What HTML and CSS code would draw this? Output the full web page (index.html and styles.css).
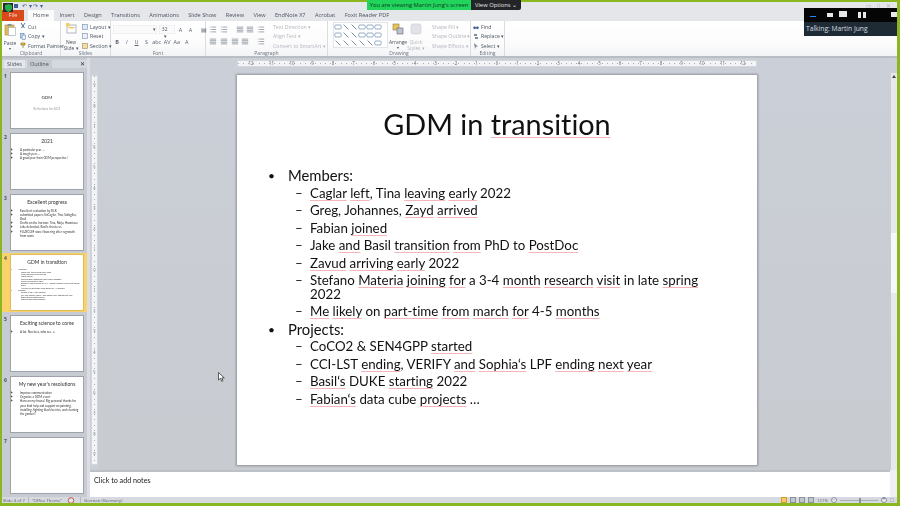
FILE: index.html
```html
<!DOCTYPE html>
<html lang="en">
<head>
<meta charset="utf-8">
<title>GDM in transition</title>
<link rel="stylesheet" href="styles.css">
</head>
<body>
<svg class="defs" width="0" height="0">
  <symbol id="lines" viewBox="0 0 10 8"><path d="M1 1h1M3 1h6M1 4h1M3 4h6M1 7h1M3 7h6" stroke="#8a919c" fill="none"/></symbol>
  <symbol id="align" viewBox="0 0 10 8"><path d="M1 1h8M1 3h8M1 5h8M1 7h8" stroke="#8a919c" fill="none"/></symbol>
  <symbol id="shape" viewBox="0 0 10 8"><rect x="1" y="1.5" width="8" height="5" rx="1.5" fill="#fff" stroke="#5b7fa8" stroke-width=".8"/></symbol>
  <symbol id="line" viewBox="0 0 10 8"><path d="M2 1l6 6" stroke="#5f6c7c" fill="none"/></symbol>
</svg>
<div class="app">
  <div class="titlebar"><span class="qat"><i class="save"></i>↶ ▾ ↷ ▾</span><span class="winctl">▭ ▯ ✕</span></div>
  <nav class="tabs">
    <span class="file">File</span>
    <span class="tab active">Home</span><span class="tab">Insert</span><span class="tab">Design</span><span class="tab">Transitions</span><span class="tab">Animations</span><span class="tab">Slide Show</span><span class="tab">Review</span><span class="tab">View</span><span class="tab">EndNote X7</span><span class="tab">Acrobat</span><span class="tab">Foxit Reader PDF</span>
  </nav>
  <div class="ribbon">
    <section class="group g-clip">
      <div class="gbody">
        <div class="bigbtn">
          <svg width="12" height="13" viewBox="0 0 12 13"><rect x="1" y="2" width="9" height="10" fill="#e0b860" stroke="#a98a45" stroke-width=".6"/><rect x="4.5" y="4.5" width="7" height="8" fill="#fff" stroke="#9aa" stroke-width=".6"/><rect x="3.5" y="1" width="4" height="2" fill="#8a8f96"/></svg>
          <span class="bl">Paste</span><span class="caret">▾</span>
        </div>
        <div class="col">
          <span class="item"><svg width="6" height="7" viewBox="0 0 6 7"><path d="M1 0l3.5 5M5 0L1.5 5" stroke="#4a6fa5" fill="none"/></svg>Cut</span>
          <span class="item"><svg width="6" height="7" viewBox="0 0 6 7"><rect x=".5" y=".5" width="3.5" height="4.5" fill="#cfe0f2" stroke="#4a6fa5" stroke-width=".5"/><rect x="2" y="2" width="3.5" height="4.5" fill="#e8f0fa" stroke="#4a6fa5" stroke-width=".5"/></svg>Copy ▾</span>
          <span class="item"><svg width="6" height="7" viewBox="0 0 6 7"><path d="M1 1h4v2H1zM3 3v3" stroke="#8a6d20" fill="#f0c840" stroke-width=".7"/></svg>Format Painter</span>
        </div>
      </div>
      <div class="glabel">Clipboard</div>
    </section>
    <section class="group g-slides">
      <div class="gbody">
        <div class="bigbtn newslide">
          <svg width="11" height="12" viewBox="0 0 11 12"><rect x="1" y="2" width="9" height="8" fill="#fff" stroke="#8f98a6" stroke-width=".7"/><rect x="2.5" y="4" width="6" height="1.4" fill="#e9c86a"/><rect x="0" y="0" width="3.5" height="3.5" fill="#f4cf5f"/></svg>
          <span class="bl">New</span><span class="bl">Slide ▾</span>
        </div>
        <div class="col">
          <span class="item"><svg width="6" height="6" viewBox="0 0 6 6"><rect x=".5" y=".5" width="5" height="5" fill="#dfe8f3" stroke="#6f8db0" stroke-width=".6"/></svg>Layout ▾</span>
          <span class="item"><svg width="6" height="6" viewBox="0 0 6 6"><rect x=".5" y=".5" width="5" height="5" fill="#eef2f7" stroke="#6f8db0" stroke-width=".6"/></svg>Reset</span>
          <span class="item"><svg width="6" height="6" viewBox="0 0 6 6"><rect x=".5" y=".5" width="5" height="5" fill="#f2dfa8" stroke="#9d8a52" stroke-width=".6"/></svg>Section ▾</span>
        </div>
      </div>
      <div class="glabel">Slides</div>
    </section>
    <section class="group g-font">
      <div class="gbody stack">
        <div class="rowi"><span class="fbox fname">▾</span><span class="fbox fsize">32 <i>▾</i></span><span class="g">A</span><span class="g">A</span><span class="g ml">▤</span></div>
        <div class="rowi"><b class="g">B</b><i class="g">I</i><u class="g">U</u><span class="g">S</span><span class="g">abc</span><span class="g">AV</span><span class="g">Aa</span><span class="g">A</span></div>
      </div>
      <div class="glabel">Font</div>
    </section>
    <section class="group g-para">
      <div class="gbody">
        <div class="stack parastack">
          <div class="rowi"><svg class="ic"><use href="#lines"/></svg><svg class="ic"><use href="#lines"/></svg><svg class="ic sp1"><use href="#align"/></svg><svg class="ic"><use href="#align"/></svg><svg class="ic"><use href="#lines"/></svg></div>
          <div class="rowi"><svg class="ic"><use href="#align"/></svg><svg class="ic"><use href="#align"/></svg><svg class="ic"><use href="#align"/></svg><svg class="ic"><use href="#align"/></svg><svg class="ic sp1"><use href="#lines"/></svg></div>
        </div>
        <div class="col faded">
          <span class="item">Text Direction ▾</span>
          <span class="item">Align Text ▾</span>
          <span class="item">Convert to SmartArt ▾</span>
        </div>
      </div>
      <div class="glabel">Paragraph</div>
    </section>
    <section class="group g-draw">
      <div class="gbody">
        <div class="gallery">
          <svg class="ics"><use href="#shape"/></svg><svg class="ics"><use href="#line"/></svg><svg class="ics"><use href="#line"/></svg><svg class="ics"><use href="#shape"/></svg><svg class="ics"><use href="#shape"/></svg><svg class="ics"><use href="#shape"/></svg>
          <svg class="ics"><use href="#shape"/></svg><svg class="ics"><use href="#line"/></svg><svg class="ics"><use href="#line"/></svg><svg class="ics"><use href="#shape"/></svg><svg class="ics"><use href="#shape"/></svg><svg class="ics"><use href="#shape"/></svg>
          <svg class="ics"><use href="#line"/></svg><svg class="ics"><use href="#line"/></svg><svg class="ics"><use href="#line"/></svg><svg class="ics"><use href="#line"/></svg><svg class="ics"><use href="#line"/></svg><svg class="ics"><use href="#shape"/></svg>
        </div>
        <div class="bigbtn arrange">
          <svg width="12" height="12" viewBox="0 0 12 12"><rect x="1" y="1" width="6" height="6" fill="#e8c455" stroke="#8a7a45" stroke-width=".6"/><rect x="5" y="5" width="6" height="6" fill="#b9c3cf" stroke="#667" stroke-width=".6"/></svg>
          <span class="bl">Arrange</span><span class="caret">▾</span>
        </div>
        <div class="bigbtn quick faded">
          <svg width="12" height="12" viewBox="0 0 12 12"><rect x="1" y="1" width="10" height="10" rx="2" fill="#e2e3e6" stroke="#c7c9cd" stroke-width=".6"/></svg>
          <span class="bl">Quick</span><span class="bl">Styles ▾</span>
        </div>
        <div class="col faded shapecol">
          <span class="item">Shape Fill ▾</span>
          <span class="item">Shape Outline ▾</span>
          <span class="item">Shape Effects ▾</span>
        </div>
      </div>
      <div class="glabel">Drawing</div>
    </section>
    <section class="group g-edit">
      <div class="gbody">
        <div class="col">
          <span class="item"><svg width="6" height="6" viewBox="0 0 6 6"><circle cx="1.6" cy="3.8" r="1.4" fill="#3d5f91"/><circle cx="4.4" cy="3.8" r="1.4" fill="#3d5f91"/></svg>Find</span>
          <span class="item"><svg width="6" height="6" viewBox="0 0 6 6"><path d="M1 1h3v2H1zM2 4h3v2H2z" fill="#7d8b9c"/></svg>Replace ▾</span>
          <span class="item"><svg width="6" height="6" viewBox="0 0 6 6"><path d="M1 0l4 3.500-2 .3L2 6z" fill="#7d8b9c"/></svg>Select ▾</span>
        </div>
      </div>
      <div class="glabel">Editing</div>
    </section>
  </div>
  <div class="workspace">
    <aside class="pane">
      <div class="panetabs"><span class="ptab on">Slides</span><span class="ptab">Outline</span><span class="pclose">✕</span></div>
      <ol class="thumbs">
        <li class="trow"><span class="tnum">1</span><div class="thumb tcenter"><p class="tt">GDM</p><p class="tsub">Reflections for 2021</p></div></li>
        <li class="trow"><span class="tnum">2</span><div class="thumb"><p class="tt">2021</p><ul class="tl"><li>A particular year …</li><li>A tough year …</li><li>A good year from GDM perspective!</li></ul></div></li>
        <li class="trow"><span class="tnum">3</span><div class="thumb"><p class="tt">Excellent progress</p><ul class="tl"><li>Excellent evaluation by DLR</li><li>submitted papers: SnCaglar, Tina, Sofoglhu, Basil</li><li>Drafts on the horizon: Tina, Ninja, Hoontaee</li><li>Jake defended, Basil's thesis res</li><li>FLUXCOM store flowering after regrowth from roots</li></ul></div></li>
        <li class="trow cur"><span class="tnum">4</span><div class="thumb"><p class="tt">GDM in transition</p><ul class="tl tiny"><li>Members:<ul><li>Caglar left, Tina leaving early 2022</li><li>Greg, Johannes, Zayd arrived</li><li>Fabian joined</li><li>Jake and Basil transition from PhD to PostDoc</li><li>Zavud arriving early 2022</li><li>Stefano Materia joining for a 3-4 month research visit in late spring 2022</li><li>Me likely on part-time from march for 4-5 months</li></ul></li><li>Projects:<ul><li>CoCO2 &amp; SEN4GPP started</li><li>CCI-LST ending, VERIFY and Sophia's LPF ending next year</li><li>Basil's DUKE starting 2022</li><li>Fabian's data cube projects …</li></ul></li></ul></div></li>
        <li class="trow"><span class="tnum">5</span><div class="thumb"><p class="tt">Exciting science to come</p><ul class="tl"><li>A lot. No clues, who see ☺</li></ul></div></li>
        <li class="trow"><span class="tnum">6</span><div class="thumb"><p class="tt">My new year's resolutions</p><ul class="tl"><li>Improve communication</li><li>Organize a GDM event</li><li>Hans on my house! Big personal thanks for your kind help and support on painting, installing, fighting black berries, and cleaning the garden!!</li></ul></div></li>
        <li class="trow"><span class="tnum">7</span><div class="thumb"></div></li>
      </ol>
    </aside>
    <main class="editor">
      <div class="canvas-row">
        <div class="vruler"><span>9</span><span>8</span><span>7</span><span>6</span><span>5</span><span>4</span><span>3</span><span>2</span><span>1</span><span>0</span><span>1</span><span>2</span><span>3</span><span>4</span><span>5</span><span>6</span><span>7</span><span>8</span><span>9</span></div>
        <div class="stage">
          <div class="hruler"><span>12</span><span>11</span><span>10</span><span>9</span><span>8</span><span>7</span><span>6</span><span>5</span><span>4</span><span>3</span><span>2</span><span>1</span><span>0</span><span>1</span><span>2</span><span>3</span><span>4</span><span>5</span><span>6</span><span>7</span><span>8</span><span>9</span><span>10</span><span>11</span><span>12</span></div>
          <article class="slide">
            <h1 class="stitle">GDM in <span class="sp">transition</span></h1>
            <ul class="l1">
              <li>Members:
                <ul class="l2">
                  <li><span class="sp">Caglar</span> <span class="sp">left</span>, Tina <span class="sp">leaving</span> <span class="sp">early</span> 2022</li>
                  <li>Greg, Johannes, <span class="sp">Zayd</span> <span class="sp">arrived</span></li>
                  <li>Fabian <span class="sp">joined</span></li>
                  <li>Jake <span class="sp">and</span> Basil <span class="sp">transition</span> <span class="sp">from</span> PhD to <span class="sp">PostDoc</span></li>
                  <li><span class="sp">Zavud</span> <span class="sp">arriving</span> <span class="sp">early</span> 2022</li>
                  <li>Stefano <span class="sp">Materia</span> <span class="sp">joining</span> <span class="sp">for</span> a 3-4 <span class="sp">month</span> <span class="sp">research</span> <span class="sp">visit</span> in late <span class="sp">spring</span><br>2022</li>
                  <li><span class="sp">Me</span> <span class="sp">likely</span> on <span class="sp">part-time</span> <span class="sp">from</span> <span class="sp">march</span> <span class="sp">for</span> 4-5 <span class="sp">months</span></li>
                </ul>
              </li>
              <li>Projects:
                <ul class="l2">
                  <li>CoCO2 &amp; SEN4GPP <span class="sp">started</span></li>
                  <li>CCI-LST <span class="sp">ending</span>, VERIFY <span class="sp">and</span> <span class="sp">Sophia‘s</span> LPF <span class="sp">ending</span> <span class="sp">next</span> <span class="sp">year</span></li>
                  <li><span class="sp">Basil‘s</span> DUKE <span class="sp">starting</span> 2022</li>
                  <li><span class="sp">Fabian‘s</span> data cube <span class="sp">projects</span> …</li>
                </ul>
              </li>
            </ul>
          </article>
        </div>
        <div class="vscroll"><i></i><b></b></div>
      </div>
      <div class="notes"><span>Click to add notes</span><div class="nscroll"></div></div>
    </main>
  </div>
  <footer class="status">
    <span>Slide 4 of 7</span><span class="sep">"Office Theme"</span>
    <svg class="sep-ic" width="8" height="7" viewBox="0 0 8 7"><circle cx="4" cy="3.500" r="2.800" fill="#dfe7f2" stroke="#c0392b" stroke-width=".8"/></svg>
    <span class="sep">German (Germany)</span>
    <span class="views"><i class="vb on"></i><i class="vb"></i><i class="vb"></i><i class="vb"></i></span>
    <span class="zoomv">121%</span>
    <span class="zbtn">−</span><span class="zslider"><i></i></span><span class="zbtn">+</span><span class="fit">⛶</span>
  </footer>
</div>
<div class="shield"><svg width="7" height="8" viewBox="0 0 7 8"><path d="M3.500 0L7 1.200V4c0 2-1.700 3.300-3.500 4C1.700 7.300 0 6 0 4V1.200z" fill="#26b04d"/></svg></div>
<div class="banner"><span class="bview">You are viewing Martin Jung's screen</span><span class="bopt">View Options ⌄</span></div>
<div class="zpanel">
  <div class="ztools"><i class="zt t1"></i><i class="zt t2"></i><i class="zt t3"></i><i class="zt t4"></i><i class="zt t5"></i></div>
  <div class="ztalk">Talking: Martin Jung</div>
</div>
<svg class="cursor" width="7" height="10" viewBox="0 0 7 10"><path d="M.5.500v7.500l2-1.700 1.200 3 1.300-.5-1.200-2.900H6.300z" fill="#fff" stroke="#222" stroke-width=".7"/></svg>
</body>
</html>
```

FILE: styles.css
```css
* { box-sizing: border-box; }
html, body { margin: 0; padding: 0; }
body { width: 900px; height: 506px; overflow: hidden; background: #8ab61f; font-family: "Open Sans", "Liberation Sans", sans-serif; position: relative; color: #3d4550; }
.defs { position: absolute; }
.app { position: absolute; inset: 2px 3px 3px 2px; display: flex; flex-direction: column; background: #cbcfd7; filter: blur(.3px); overflow: hidden; }

.titlebar { height: 8px; background: #e5e6e9; display: flex; justify-content: space-between; padding-left: 12px; font-size: 6px; line-height: 8px; color: #3f5f95; flex: none; }
.save { display: inline-block; width: 4px; height: 4px; background: #3f5f95; margin-right: 4px; }
.winctl { color: #aeb2b8; padding-right: 4px; letter-spacing: 2px; }
.tabs { height: 11px; background: #e5e6e9; display: flex; align-items: stretch; flex: none; font-size: 5.600px; line-height: 11px; color: #4a5260; }
.file { width: 22px; background: #d9491c; color: #f7d9cf; text-align: center; margin-right: 4px; }
.tab { padding: 0 4.700px; }
.tab.active { background: #fbfbfc; padding: 0 5px; margin-right: 1px; }

.ribbon { height: 37px; flex: none; display: flex; background: linear-gradient(#fff, #fbfbfc 70%, #f2f3f5); border-bottom: 2px solid #b9bdc4; font-size: 5.200px; color: #4a5260; }
.group { display: flex; flex-direction: column; border-right: 1px solid #dadce0; flex: none; padding-top: 1px; }
.gbody { flex: 1; display: flex; gap: 3px; padding: 0 2px; min-height: 0; }
.glabel { height: 6px; line-height: 6px; text-align: center; color: #6a7280; font-size: 5px; }
.g-clip { width: 59px; }
.g-slides { width: 50px; }
.g-font { width: 95px; }
.g-para { width: 122px; }
.g-draw { width: 143px; }
.g-edit { width: 34px; }
.g-clip .gbody { padding-left: 1px; }
.bigbtn { display: flex; flex-direction: column; align-items: center; width: 14px; line-height: 6px; font-size: 4.900px; flex: none; padding-top: 1px; }
.bigbtn svg { margin-bottom: 4px; flex: none; }
.newslide { width: 16px; }
.bl { white-space: nowrap; }
.caret { font-size: 4px; }
.col { display: flex; flex-direction: column; gap: 2.500px; padding-top: 1px; }
.item { display: flex; align-items: center; gap: 2px; height: 7px; white-space: nowrap; }
.faded { color: #b2b6bc; }
.stack { flex-direction: column; gap: 3px; padding-top: 3px; }
.rowi { display: flex; align-items: center; gap: 1.800px; height: 9px; }
.fbox { background: #fafafb; border: 1px solid #eef0f2; height: 9px; line-height: 7px; font-size: 5px; flex: none; }
.fname { width: 44px; text-align: right; }
.fsize { width: 16px; text-align: left; padding-left: 2px; }
.fsize i { font-style: normal; margin-left: 2px; }
.g { font-size: 5.500px; min-width: 8px; text-align: center; color: #5b6470; }
.ml { margin-left: 4px; }
.parastack { gap: 3px; width: 62px; flex: none; display: flex; padding-left: 1px; }
.ic { width: 8px; height: 7px; margin-right: 1px; flex: none; }
.sp1 { margin-left: 5px; }
.gallery { width: 55px; height: 26px; margin-left: 3px; display: grid; grid-template-columns: repeat(6, 8px); grid-auto-rows: 8px; background: #fff; border: 1px solid #e2e4e8; padding: 0; flex: none; }
.ics { width: 8px; height: 8px; }
.g-draw .gbody { gap: 0; }
.arrange { width: 20px; }
.quick { width: 16px; }
.shapecol { margin-left: 8px; }
.g-draw .bigbtn svg { margin-bottom: 4px; }

.workspace { flex: 1; display: flex; min-height: 0; }
.pane { width: 88px; flex: none; display: flex; flex-direction: column; background: #c7cbd2; border-right: 3px solid #dcdee3; }
.panetabs { height: 8px; display: flex; gap: 2px; font-size: 5.500px; line-height: 8px; padding-left: 2px; background: #d5d8de; flex: none; color: #4a5260; margin-top: 2px; }
.ptab { padding: 0 3px; background: #c6cad1; }
.ptab.on { background: #e4e6ea; }
.pclose { margin-left: auto; margin-right: 2px; font-size: 6px; color: #333; }
.thumbs { list-style: none; margin: 0; padding: 4px 0 0; display: flex; flex-direction: column; gap: 3.800px; flex: 1; }
.trow { display: flex; gap: 2px; align-items: stretch; height: 57px; padding-left: 2px; flex: none; }
.tnum { width: 4px; font-size: 5px; font-weight: 700; line-height: 8px; color: #4a5260; }
.thumb { width: 74px; height: 57px; background: #fff; border: 1px solid #9ea3ab; padding-top: 1px; color: #333; overflow: hidden; font-family: Lato, "Liberation Sans", sans-serif; font-variant-ligatures: none; }
.cur { background: #f9d36a; margin: -1px 0; height: 59px; padding-top: 1px; }
.cur .thumb { border-color: #e1bc5a; }
.tt { margin: 3px 0 0; text-align: center; font-size: 5px; line-height: 7px; }
.tcenter .tt { margin-top: 20px; font-size: 4.500px; }
.tsub { margin: 6px 0 0; text-align: center; font-size: 3px; color: #999; }
.tl { margin: 3px 0 0; padding: 0 3px 0 9px; font-size: 3px; line-height: 4.200px; }
.tiny { font-size: 2px; line-height: 2.300px; margin-top: 2px; padding-left: 7px; }
.tiny ul { margin: 0; padding-left: 3px; list-style: none; }

.editor { flex: 1; min-width: 0; display: flex; flex-direction: column; }
.canvas-row { flex: 1; display: flex; min-height: 0; }
.vruler { width: 7px; margin: 17px 0 6px 1px; flex: none; height: 390px; background: repeating-linear-gradient(#a9adb3 0 1px, transparent 1px 5.125px) center / 1px 100% no-repeat, #f3f4f6; border: 1px solid #d4d6da; display: flex; flex-direction: column; align-items: center; justify-content: center; font-size: 4px; color: #6a7078; }
.vruler span { height: 20.500px; line-height: 20.500px; flex: none; }
.stage { flex: 1; display: flex; flex-direction: column; align-items: flex-start; padding-left: 139px; min-width: 0; background: linear-gradient(#cbcfd7, #c8cbd0); }
.hruler { width: 520px; height: 7px; margin-top: 2px; background: repeating-linear-gradient(90deg, #a9adb3 0 1px, transparent 1px 5.125px) center / 100% 1px no-repeat, #f3f4f6; border: 1px solid #d4d6da; display: flex; justify-content: center; font-size: 4.500px; line-height: 5px; color: #5f656e; flex: none; }
.hruler span { width: 20.500px; flex: none; text-align: center; }
.slide { margin-top: 8px; width: 520px; height: 390px; background: #fff; box-shadow: 0 0 2px 1px #8f939a; flex: none; font-family: Lato, "Liberation Sans", sans-serif; color: #111; font-variant-ligatures: none; }
.stitle { margin: 0; padding-top: 27px; height: 92px; text-align: center; font-weight: 400; font-size: 28.800px; line-height: 44px; }
.l1 { margin: 0; padding: 0 0 0 51px; font-size: 14.800px; line-height: 17.600px; width: 480px; list-style: none; }
.l1 > li { position: relative; }
.l1 > li::before { content: "•"; position: absolute; left: -20px; font-size: 12px; }
.l2 { margin: 0; padding: 0 0 0 22px; list-style: none; font-size: 13.300px; line-height: 17.500px; }
.l2 li { position: relative; line-height: 13.500px; padding: 2px 0; }
.l2 li::before { content: "–"; position: absolute; left: -15px; }
.sp { text-decoration: underline solid #f4b4b8 1px; text-underline-offset: 2px; text-decoration-skip-ink: none; }

.vscroll { width: 6px; flex: none; background: #e6e8ec; position: relative; margin-top: 15px; }
.vscroll i { position: absolute; left: 1px; top: 2px; width: 0; height: 0; border: 2px solid transparent; border-bottom: 3px solid #444; border-top: 0; }
.vscroll b { position: absolute; left: 0; right: 0; top: 160px; height: 60px; background: #f6f7f9; }
.notes { height: 27px; flex: none; background: #fff; border-top: 2px solid #bcc0c7; font-family: Lato, "Liberation Sans", sans-serif; font-size: 7.200px; line-height: 14px; color: #222; padding: 2px 4px; display: flex; justify-content: space-between; }
.nscroll { width: 7px; margin: -4px -4px -2px 0; background: #eef0f3; }
.status { height: 6px; flex: none; display: flex; align-items: center; gap: 3px; background: #d6d9df; font-size: 4.300px; line-height: 6px; color: #596170; padding-left: 1px; }
.sep { padding-left: 3px; border-left: 1px solid #b5b9c0; }
.sep-ic { margin: 0 2px; }
.views { margin-left: auto; display: flex; gap: 3px; }
.vb { width: 6px; height: 6px; background: #c1c5cc; border: 1px solid #8c929b; display: block; }
.vb.on { background: #f5c95f; border-color: #d59c2a; }
.zbtn { width: 6px; height: 6px; border-radius: 50%; border: 1px solid #8c929b; background: #eef0f3; line-height: 3px; font-size: 5px; text-align: center; }
.zslider { width: 38px; height: 1px; background: #aab0b8; position: relative; }
.zslider i { position: absolute; left: 19px; top: -2px; width: 2px; height: 5px; background: #eef0f3; border: 1px solid #8c929b; }
.fit { width: 6px; font-size: 5px; margin-right: 1px; }

.shield { position: absolute; left: 3px; top: 3px; width: 10px; height: 9px; background: #2b2b2b; display: flex; align-items: center; justify-content: center; }
.banner { position: absolute; left: 367px; top: 0; height: 10px; display: flex; font-size: 5.800px; line-height: 10px; }
.bview { width: 104px; background: #21d45c; color: #0f3b20; text-align: center; }
.bopt { width: 50px; background: #232428; color: #e8e8e8; text-align: center; border-radius: 0 0 2px 0; }
.zpanel { position: absolute; left: 804px; top: 8px; width: 93px; height: 28px; background: #1e2a34; }
.ztools { height: 14px; background: #050505; position: relative; }
.zt { position: absolute; display: block; background: #e8e8e8; }
.t1 { left: 6px; top: 8px; width: 6px; height: 1px; background: #1a8cff; }
.t2 { left: 23px; top: 5px; width: 6px; height: 4px; }
.t3 { left: 35px; top: 3px; width: 8px; height: 6px; }
.t4 { left: 54px; top: 4px; width: 8px; height: 6px; background: repeating-linear-gradient(90deg, #e8e8e8 0 3px, transparent 3px 5px); }
.t5 { left: 87px; top: 4px; width: 6px; height: 5px; }
.ztalk { padding-left: 2px; font-size: 6.700px; line-height: 13px; color: #d8dee4; font-family: "Open Sans", sans-serif; }
.cursor { position: absolute; left: 218px; top: 372px; }
```
